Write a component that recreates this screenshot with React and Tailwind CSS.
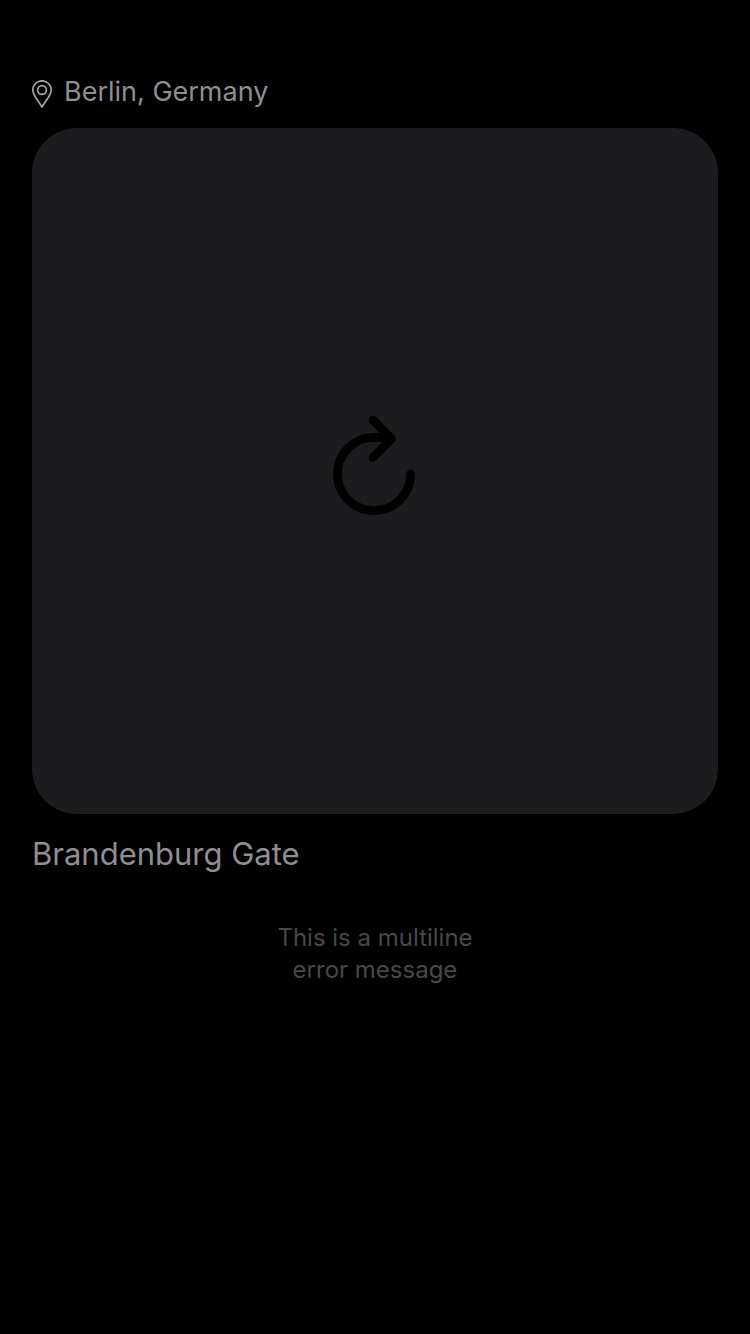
export default function App() {
  return (
    <main className="flex min-h-screen flex-col bg-black px-8 pt-[72px] font-['Inter',sans-serif] text-[#8e8e93]">
      <header className="flex h-10 items-center gap-3 text-[27px] leading-10">
        <svg className="mt-1 h-7 w-5 shrink-0 text-[#a6a6a8]" viewBox="0 0 20 28" fill="none" stroke="currentColor" strokeWidth="1.7" aria-hidden="true">
          <path d="M10 27C7 21.500 .8 15.500 .8 10A9.200 9.200 0 0 1 19.200 10C19.200 15.500 13 21.500 10 27Z" strokeLinejoin="round" />
          <circle cx="10" cy="10" r="4.400" />
        </svg>
        <span>Berlin, Germany</span>
      </header>
      <section className="mt-4 flex aspect-square w-full items-center justify-center rounded-[45px] bg-[#1c1c1e]">
        <button type="button" aria-label="Reload" className="text-black">
          <svg className="h-[110px] w-[90px]" viewBox="330 416 90 110" fill="none" stroke="currentColor" strokeWidth="8.800" strokeLinecap="round" strokeLinejoin="round">
            <path d="M410.600 474A36.600 36.600 0 1 1 374 437.400Q381 437.400 388 438.500" />
            <path d="M373 420.200L391.500 438.800L373 457.500" />
          </svg>
        </button>
      </section>
      <h1 className="mt-4 text-[31px] leading-[48px]">Brandenburg Gate</h1>
      <p className="mt-11 text-center text-2xl leading-8 text-[#48484a]">
        This is a multiline
        <br />
        error message
      </p>
    </main>
  );
}
